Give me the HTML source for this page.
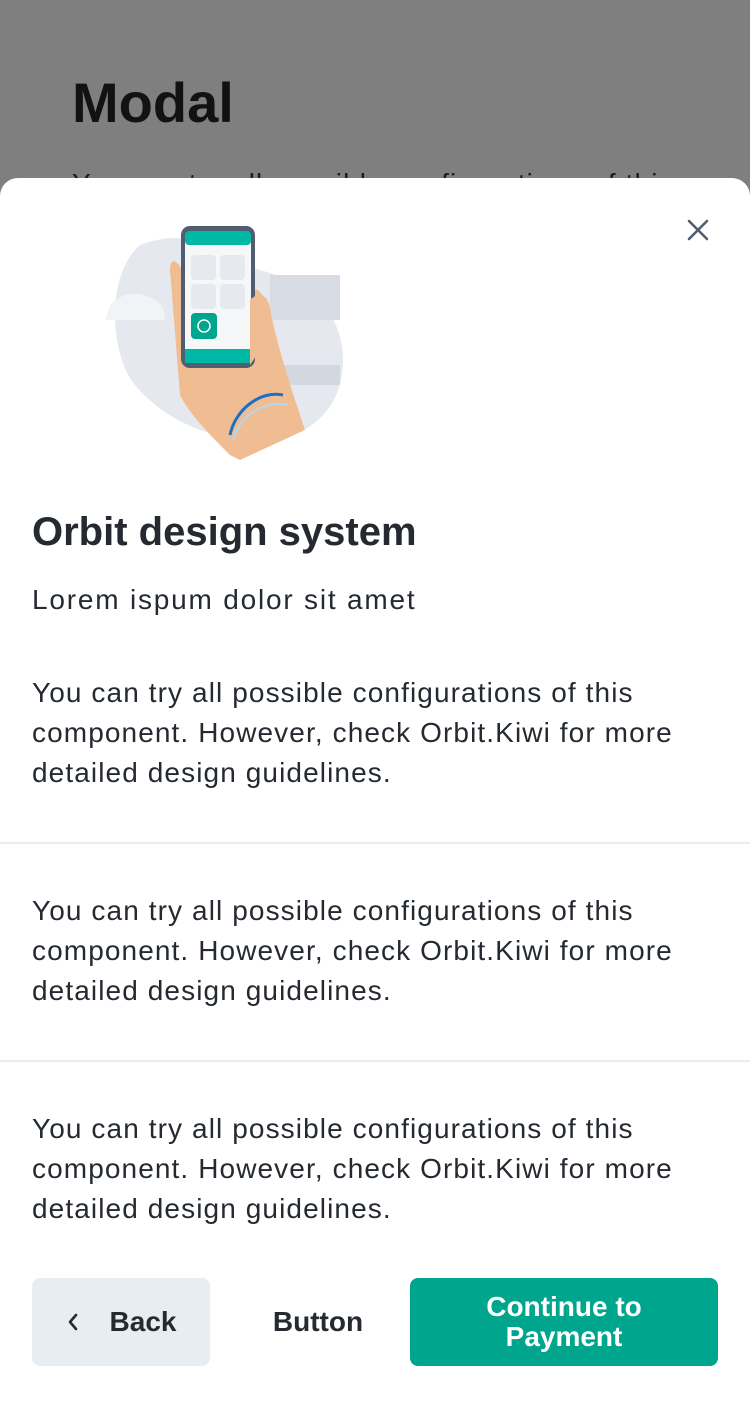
<!DOCTYPE html>
<html><head><meta charset="utf-8"><style>
*{margin:0;padding:0;box-sizing:border-box}
body{width:750px;height:1398px;background:#7f7f7f;position:relative;overflow:hidden;font-family:"Liberation Sans",sans-serif;color:#252a31}
.bgt{position:absolute;left:72px;top:70px;font-size:56px;font-weight:bold;color:#101214}
.bgs{position:absolute;left:72px;top:168px;font-size:28px;color:#1a1c1e;letter-spacing:1.1px}
.modal{position:absolute;left:0;top:178px;width:750px;height:1240px;background:#fff;border-radius:18px 18px 0 0}
.close{position:absolute;left:686px;top:218px}
.t{position:absolute;left:32px;font-size:28px;line-height:40px;color:#252a31;letter-spacing:1.1px;white-space:nowrap}
.h{position:absolute;left:32px;top:510px;font-size:40px;font-weight:bold;letter-spacing:0px}
.sep{position:absolute;left:0;width:750px;height:2px;background:#e8edf1}
.btn{position:absolute;top:1278px;height:88px;border-radius:8px;display:flex;align-items:center;justify-content:center;font-size:28px;font-weight:bold}
</style></head><body>
<div class="bgt">Modal</div>
<div class="bgs">You can try all possible configurations of this</div>
<div class="modal"></div>
<svg class="close" width="24" height="24" viewBox="0 0 24 24"><path d="M3 3L21 21M21 3L3 21" stroke="#4f5e71" stroke-width="2.6" stroke-linecap="round"/></svg>
<svg style="position:absolute;left:100px;top:215px" width="260" height="260" viewBox="0 0 260 260">
<path d="M40 30 C80 15 110 25 140 50 C180 60 230 70 242 130 C250 190 210 230 150 225 C100 222 60 200 35 170 C10 140 5 60 40 30Z" fill="#e5e9ef"/>
<rect x="170" y="60" width="70" height="45" fill="#d7dce4"/>
<rect x="150" y="150" width="90" height="20" fill="#d3d8e0"/>
<path d="M10 90 q20-20 45-5 q10 5 10 20 h-60z" fill="#f1f3f6"/>
<path d="M140 245 L205 215 C190 170 180 140 170 95 C160 70 150 65 145 95 L120 140 L90 130 L85 60 C75 40 70 45 70 55 L80 180 C90 200 110 220 130 240Z" fill="#f0bd93"/>
<rect x="81" y="11" width="74" height="142" rx="9" fill="#4f5e71"/>
<rect x="85" y="16" width="66" height="132" rx="6" fill="#f5f7f9"/>
<rect x="85" y="16" width="66" height="14" rx="4" fill="#00b8a3"/>
<rect x="85" y="134" width="66" height="14" fill="#00b8a3"/>
<rect x="91" y="40" width="25" height="25" rx="4" fill="#e6e9ee"/>
<rect x="120" y="40" width="25" height="25" rx="4" fill="#e6e9ee"/>
<rect x="91" y="69" width="25" height="25" rx="4" fill="#e6e9ee"/>
<rect x="120" y="69" width="25" height="25" rx="4" fill="#e6e9ee"/>
<rect x="91" y="98" width="26" height="26" rx="4" fill="#00a58e"/>
<circle cx="104" cy="111" r="6" fill="none" stroke="#fff" stroke-width="1.5"/>
<path d="M150 85 C165 70 175 90 170 120 L150 150Z" fill="#f0bd93"/>
<path d="M130 220 C135 195 160 175 183 180" fill="none" stroke="#1a6fc6" stroke-width="3"/>
<path d="M133 225 C140 200 165 185 188 190" fill="none" stroke="#b8d5f0" stroke-width="2"/>
</svg>
<div class="h">Orbit design system</div>
<div class="t" style="top:580px;letter-spacing:1.8px">Lorem ispum dolor sit amet</div>
<div class="t" style="top:673px">You can try all possible configurations of this<br>component. However, check Orbit.Kiwi for more<br>detailed design guidelines.</div>
<div class="sep" style="top:842px"></div>
<div class="t" style="top:891px">You can try all possible configurations of this<br>component. However, check Orbit.Kiwi for more<br>detailed design guidelines.</div>
<div class="sep" style="top:1060px"></div>
<div class="t" style="top:1109px">You can try all possible configurations of this<br>component. However, check Orbit.Kiwi for more<br>detailed design guidelines.</div>
<div class="btn" style="left:32px;width:178px;background:#e8edf1;color:#252a31"><svg width="14" height="22" viewBox="0 0 14 22" style="margin-right:30px"><path d="M10 4L4 11L10 18" fill="none" stroke="#252a31" stroke-width="2.6" stroke-linecap="round" stroke-linejoin="round"/></svg>Back</div>
<div class="btn" style="left:240px;width:156px;color:#252a31">Button</div>
<div class="btn" style="left:410px;width:308px;background:#00a58e;color:#fff;text-align:center;line-height:30px">Continue to<br>Payment</div>
</body></html>
